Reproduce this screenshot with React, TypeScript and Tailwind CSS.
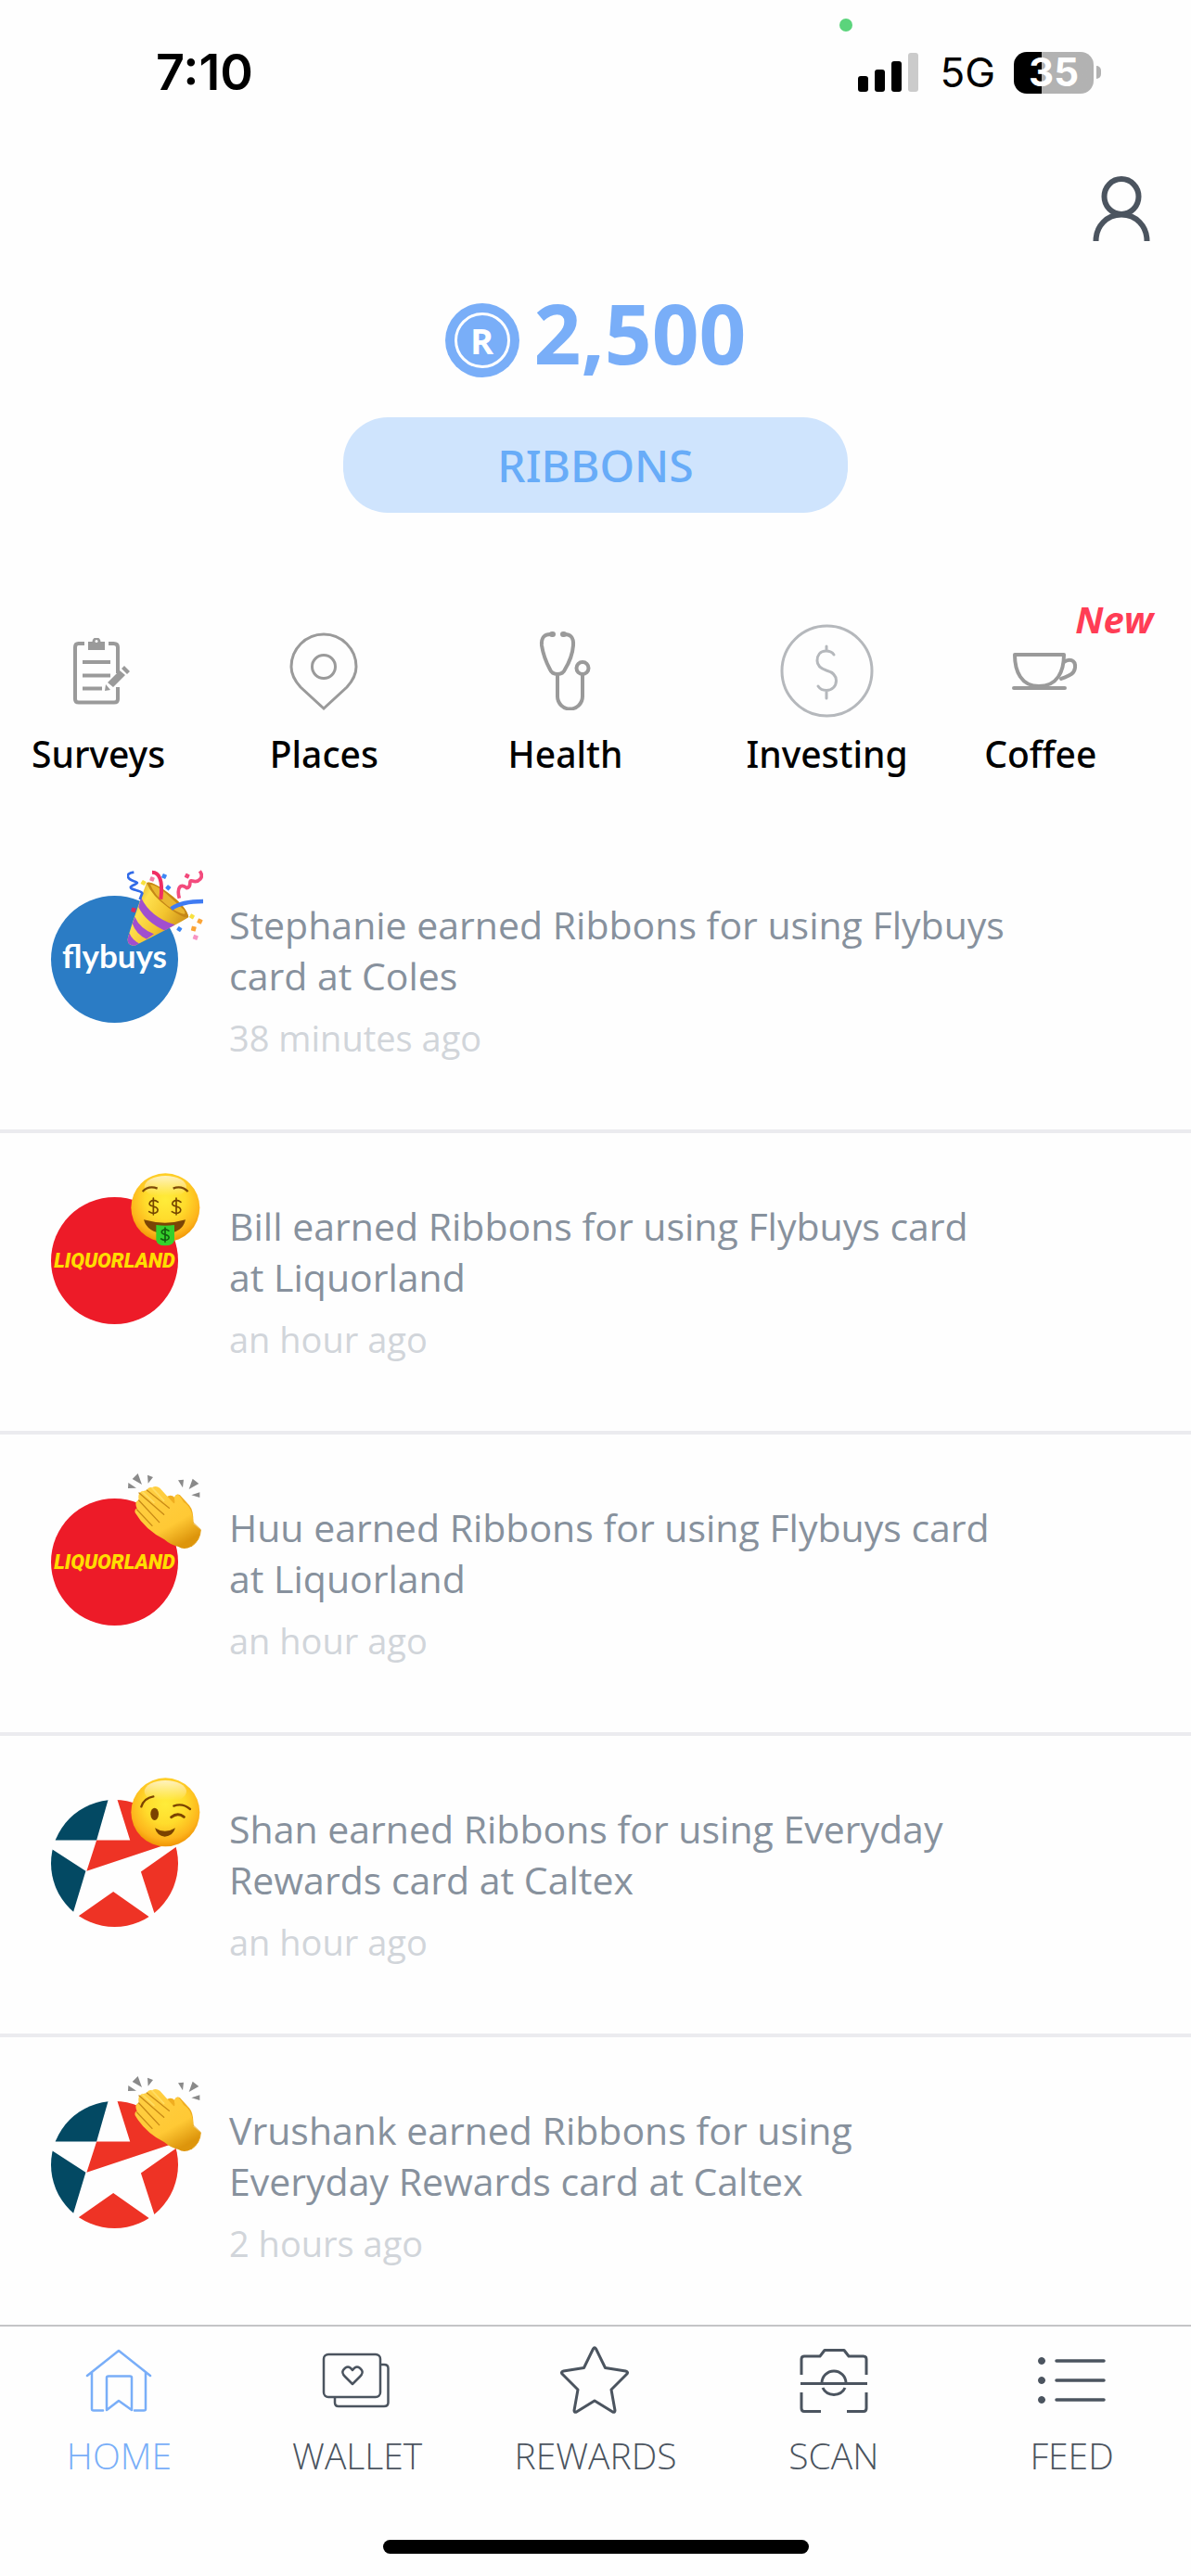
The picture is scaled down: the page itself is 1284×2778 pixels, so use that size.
import { ReactNode } from "react";

type Post = {
  brand: "flybuys" | "liquorland" | "caltex";
  emoji: "party" | "money" | "clap" | "wink";
  text: string;
  time: string;
};

const posts: Post[] = [
  { brand: "flybuys", emoji: "party", text: "Stephanie earned Ribbons for using Flybuys card at Coles", time: "38 minutes ago" },
  { brand: "liquorland", emoji: "money", text: "Bill earned Ribbons for using Flybuys card at Liquorland", time: "an hour ago" },
  { brand: "liquorland", emoji: "clap", text: "Huu earned Ribbons for using Flybuys card at Liquorland", time: "an hour ago" },
  { brand: "caltex", emoji: "wink", text: "Shan earned Ribbons for using Everyday Rewards card at Caltex", time: "an hour ago" },
  { brand: "caltex", emoji: "clap", text: "Vrushank earned Ribbons for using Everyday Rewards card at Caltex", time: "2 hours ago" },
];

const StatusBar = () => (
  <div className="relative flex h-[140px] items-center justify-between pt-4 pr-[97px] pb-0 pl-[168px] font-['Inter',sans-serif] text-black">
    <span className="text-[54px] leading-none font-semibold">7:10</span>
    <span className="absolute top-5 right-[365px] size-[14px] rounded-full bg-[#5bd47c]" />
    <div className="flex items-center">
      <svg className="h-[42px] w-[66px]" viewBox="0 0 66 42">
        <rect x="0" y="25" width="11" height="17" rx="3" />
        <rect x="18" y="18" width="11" height="24" rx="3" />
        <rect x="36" y="9" width="11" height="33" rx="3" />
        <rect x="54" y="0" width="11" height="42" rx="3" fill="#cbcbcb" />
      </svg>
      <span className="ml-[22px] text-[44px] leading-none">5G</span>
      <div className="ml-5 flex items-center gap-[3px]">
        <div className="flex h-[45px] w-[86px] items-center justify-center rounded-[14px] bg-linear-to-r from-black from-35% to-[#b2b2b2] to-35%">
          <span className="text-[42px] leading-none font-bold text-white">35</span>
        </div>
        <span className="h-[14px] w-[5px] rounded-r-full bg-[#b2b2b2]" />
      </div>
    </div>
  </div>
);

const ClipboardIcon = () => (
  <svg className="ml-2 h-[72px] w-[62px]" viewBox="0 0 62 72" fill="none" stroke="#9a9a9a" strokeWidth="4">
    <path d="M12 6H5.500Q2 6 2 10V66Q2 69.500 6 69.500H44Q48 69.500 48 66V53M38 6H43.500Q48 6 48 10V38" />
    <path d="M10 26H40M10 40.500H40M10 54.500H31" />
    <path d="M16 4H20.500A4.500 4.500 0 0 1 29.500 4H34V13H16Z" fill="#9a9a9a" stroke="none" />
    <circle cx="25" cy="3.500" r="1.500" fill="#fff" stroke="none" />
    <path d="M37 48L50 35L56 40L43 53Z M35 50L40 56L34 57Z M52 33L55 30L61 36L58 39Z" fill="#9a9a9a" stroke="none" />
  </svg>
);

const PinIcon = () => (
  <svg className="h-[84px] w-[74px]" viewBox="0 0 74 84" fill="none" stroke="#9a9a9a" strokeWidth="3">
    <path d="M37 82L12 59Q2 48 2 37A35 35 0 0 1 72 37Q72 48 62 59Z" />
    <circle cx="37" cy="37" r="12.500" />
  </svg>
);

const StethoscopeIcon = () => (
  <svg className="h-[85px] w-[56px]" viewBox="0 0 56 85" fill="none" stroke="#9a9a9a" strokeWidth="4">
    <path d="M14 3Q2 2 3 15Q5 28 12 41Q14 46 20 46Q26 46 28 41Q36 28 37 15Q38 2 26 3" strokeLinecap="round" />
    <path d="M20 46V70A13.500 13.500 0 0 0 47 70V47" />
    <circle cx="47" cy="39.500" r="6.500" />
    <path d="M14 3H15M26 3H27" strokeWidth="6" strokeLinecap="round" />
  </svg>
);

const DollarIcon = () => (
  <svg className="size-[101px]" viewBox="0 0 101 101" fill="none" stroke="#b5b8bc" strokeWidth="3" strokeLinecap="round">
    <circle cx="50.500" cy="50.500" r="48.500" />
    <path d="M58 33C56 30 53 29 49.500 29C43 29 40 34 40 39.500C40 45 44 48 50 50C57 52 60.500 55 60.500 61C60.500 67 56 71.500 50 71.500C46 71.500 43 70 41 67M50 24V29M50 72V80" />
  </svg>
);

const CupIcon = () => (
  <svg className="ml-2 h-[42px] w-[72px]" viewBox="0 0 72 42" fill="none" stroke="#9a9a9a" strokeWidth="4" strokeLinejoin="round" strokeLinecap="round">
    <path d="M4 3H57C57 21 50 37 30 37C11 37 4 21 4 3ZM3 39H58" />
    <path d="M57 11C62 7 70 8 69 17C68 25 61 26 54 29" />
  </svg>
);

const categories: { name: string; icon: ReactNode; isNew?: boolean }[] = [
  { name: "Surveys", icon: <ClipboardIcon /> },
  { name: "Places", icon: <PinIcon /> },
  { name: "Health", icon: <StethoscopeIcon /> },
  { name: "Investing", icon: <DollarIcon /> },
  { name: "Coffee", icon: <CupIcon />, isNew: true },
];

const CaltexLogo = () => (
  <svg className="size-full" viewBox="75 123 410 410">
    <path d="M263 110L222 253H60V110ZM60 270L187 353L147 485L100 540L60 485Z" fill="#034963" />
    <path d="M285 110L330 253H222L190 353L485 255V110ZM500 260L365 355L408 487L500 540ZM276 419L165 497L150 560H405L390 499Z" fill="#ee3325" />
  </svg>
);

const faceDefs = (
  <defs>
    <radialGradient id="face" cx="50%" cy="38%" r="64%">
      <stop offset="0" stopColor="#ffec3a" />
      <stop offset="0.450" stopColor="#ffdc2c" />
      <stop offset="0.800" stopColor="#fdb41c" />
      <stop offset="1" stopColor="#ee8f00" />
    </radialGradient>
    <linearGradient id="shine" x1="0" y1="0" x2="0" y2="1">
      <stop offset="0" stopColor="#fff" stopOpacity="0.700" />
      <stop offset="0.900" stopColor="#fff" stopOpacity="0" />
    </linearGradient>
  </defs>
);

const Emoji = ({ kind }: { kind: Post["emoji"] }) => {
  if (kind === "party") {
    return (
      <svg className="size-full" viewBox="321 54 246 246" fill="none">
        <defs>
          <linearGradient id="cone" x1="0" y1="0" x2="1" y2="0.600">
            <stop offset="0" stopColor="#b97c10" />
            <stop offset="0.350" stopColor="#ffe14f" />
            <stop offset="0.650" stopColor="#f3c52f" />
            <stop offset="1" stopColor="#c98b17" />
          </linearGradient>
          <clipPath id="coneClip">
            <path d="M384 96Q400 88 455 130Q512 172 520 207Q500 222 347 299Q324 301 322 280Q340 215 384 96Z" />
          </clipPath>
        </defs>
        <g clipPath="url(#coneClip)">
          <rect x="321" y="85" width="205" height="220" fill="url(#cone)" />
          <path d="M366 143Q396 207 476 232L445 252Q380 222 358 175ZM346 206Q362 243 408 262L384 278Q350 262 338 228ZM328 258Q338 282 362 293L345 302L318 290Z" fill="#a14fce" />
        </g>
        <path d="M384 96Q400 88 455 130Q512 172 520 207Q506 214 455 177Q400 137 384 96Z" fill="#c58716" />
        <path d="M396 101Q413 101 448 131L505 184Q512 198 505 197Q490 196 452 170Q408 135 396 101Z" fill="#e9b630" />
        <path d="M402 62C424 62 438 85 430 149" stroke="#f02d63" strokeWidth="12" />
        <path d="M464 180Q497 156 567 156" stroke="#3f7bf2" strokeWidth="13" />
        <path d="M343 62C312 66 322 84 343 91C368 98 343 99 333 109C328 120 367 119 370 130L362 150" stroke="#316be8" strokeWidth="8" />
        <path d="M556 58C572 78 552 97 532 90C516 86 534 110 514 113C493 95 481 114 490 146" stroke="#f34b7d" strokeWidth="11" />
        <g>
          <rect x="367" y="89" width="14" height="14" rx="2" transform="rotate(30 374 96)" fill="#f8e13e" />
          <rect x="395" y="77" width="14" height="14" rx="2" transform="rotate(20 402 84)" fill="#f57ca5" />
          <rect x="434" y="68" width="14" height="14" rx="2" transform="rotate(25 441 75)" fill="#3d86f5" />
          <rect x="447" y="105" width="14" height="14" rx="2" transform="rotate(40 454 112)" fill="#3d86f5" />
          <rect x="508" y="67" width="14" height="14" rx="2" transform="rotate(25 515 74)" fill="#f2497b" />
          <rect x="335" y="177" width="14" height="14" rx="2" transform="rotate(15 342 184)" fill="#d52c5e" />
          <rect x="524" y="198" width="14" height="14" rx="2" transform="rotate(30 531 205)" fill="#f8e13e" />
          <rect x="549" y="213" width="15" height="15" rx="2" transform="rotate(25 556 220)" fill="#fba436" />
          <rect x="529" y="237" width="15" height="15" rx="2" transform="rotate(15 536 244)" fill="#fba436" />
          <rect x="483" y="239" width="14" height="14" rx="2" transform="rotate(35 490 246)" fill="#3d86f5" />
          <rect x="535" y="265" width="15" height="15" rx="2" transform="rotate(20 542 272)" fill="#f794c4" />
        </g>
      </svg>
    );
  }
  if (kind === "clap") {
    return (
      <svg className="size-full" viewBox="321 54 246 246" fill="none">
        <defs>
          <linearGradient id="hand" x1="0" y1="0" x2="0.600" y2="1">
            <stop offset="0" stopColor="#ffd045" />
            <stop offset="0.700" stopColor="#ffc935" />
            <stop offset="1" stopColor="#dd950c" />
          </linearGradient>
        </defs>
        <path d="M356 57L369 93L338 75ZM387 62L405 69L389 89ZM325 87L351 104L324 105ZM486 79L504 77L501 103ZM533 74L553 90L521 108ZM556 118V135L529 127Z" fill="#8a8a8a" />
        <path d="M448 133Q463 122 475 135Q480 120 492 127L522 160Q537 177 535 218L490 260Z" fill="#f0ae20" />
        <path d="M385 111Q390 99 402 103Q414 95 427 104L469 151Q476 159 475 145Q470 127 486 125Q493 130 504 150Q533 167 536 220L559 239Q558 274 528 294Q505 306 487 294Q462 289 442 271Q380 240 347 184Q344 171 353 171Q343 147 359 143Q354 120 370 115Z" fill="url(#hand)" />
        <path d="M385 111L457 169M360 120L440 190M359 144L425 215M353 174L402 226" stroke="#c98a16" strokeWidth="4" strokeLinecap="round" />
        <path d="M402 104L440 145M370 116L408 151" stroke="#ffdc62" strokeWidth="5" strokeLinecap="round" />
        <path d="M534 215L559 239Q558 274 528 294" stroke="#e6a21a" strokeWidth="3" />
      </svg>
    );
  }
  if (kind === "money") {
    return (
      <svg className="size-full" viewBox="321 39 246 246" fill="none">
        {faceDefs}
        <circle cx="445" cy="157" r="111" fill="url(#face)" />
        <ellipse cx="445" cy="90" rx="68" ry="36" fill="url(#shine)" />
        <path d="M371 105Q391 84 419 95M518 105Q497 84 470 95" stroke="#7e4b08" strokeWidth="7" />
        <path d="M375 196Q445 216 510 196Q500 240 443 241Q386 238 375 196Z" fill="#7b4505" />
        <path d="M415 213Q445 218 474 213V262Q472 280 444 280Q417 280 415 262Z" fill="#35d02b" />
        <g stroke="#754600" strokeWidth="5" strokeLinecap="round">
          <path d="M421 139Q406 127 395 139Q388 150 406 153Q425 158 419 170Q408 181 392 170M406 126V180" />
          <path d="M495 139Q480 127 469 139Q462 150 480 153Q499 158 493 170Q482 181 466 170M480 126V180" />
          <path d="M456 232Q444 223 434 232Q429 241 444 244Q461 248 455 258Q445 267 431 258M444 222V268" stroke="#125d10" />
        </g>
      </svg>
    );
  }
  return (
    <svg className="size-full" viewBox="321 39 246 246" fill="none">
      {faceDefs}
      <circle cx="445" cy="163" r="111" fill="url(#face)" />
      <ellipse cx="445" cy="96" rx="68" ry="36" fill="url(#shine)" />
      <path d="M367 145Q376 117 406 112M472 143Q500 132 525 153" stroke="#7b4300" strokeWidth="7" strokeLinecap="round" />
      <ellipse cx="410" cy="169" rx="13" ry="20" fill="#7b4300" />
      <path d="M464 179Q485 162 505 178" stroke="#7b4300" strokeWidth="9" strokeLinecap="round" />
      <path d="M411 214Q443 235 477 214Q469 241 443 242Q418 240 411 214Z" fill="#7b4300" />
    </svg>
  );
};

const Avatar = ({ brand, emoji }: Pick<Post, "brand" | "emoji">) => (
  <div className="relative size-[137px] shrink-0">
    {brand === "flybuys" && (
      <div className="flex size-full items-center justify-center rounded-full bg-[#2b7cc5] pb-2">
        <span className="font-['Lato',sans-serif] text-[35px] leading-none font-bold text-white">flybuys</span>
      </div>
    )}
    {brand === "liquorland" && (
      <div className="flex size-full items-center justify-center rounded-full bg-[#ed1b28]">
        <span className="font-['Roboto','Liberation_Sans',sans-serif] text-[22px] leading-none font-black text-[#ffdd00] italic">
          LIQUORLAND
        </span>
      </div>
    )}
    {brand === "caltex" && (
      <div className="size-full overflow-hidden rounded-full">
        <CaltexLogo />
      </div>
    )}
    <div className="absolute -top-7 left-[82px] size-[82px]">
      <Emoji kind={emoji} />
    </div>
  </div>
);

const HomeIcon = () => (
  <svg className="h-[76px] w-[76px]" viewBox="0 0 76 76" fill="none" stroke="currentColor" strokeWidth="2.500" strokeLinecap="round" strokeLinejoin="round">
    <path d="M4 33L38 6L72 33M9 30V69Q9 70.500 11 70.500H21M67 30V69Q67 70.500 65 70.500H55" />
    <path d="M25 70V35Q25 33.500 27 33.500H50Q52 33.500 52 35V70L38 60Z" />
  </svg>
);

const WalletIcon = () => (
  <svg className="h-[76px] w-[76px]" viewBox="0 0 76 76" fill="none" stroke="currentColor" strokeWidth="2.500" strokeLinejoin="round">
    <rect x="2" y="10" width="61" height="46" rx="5" />
    <path d="M63 21H67Q71.500 21 71.500 25V62Q71.500 66 67 66H18Q14 66 14 62V56" />
    <path d="M33 42L25 34Q21 30 23 27Q28 20 33 27Q38 20 43 27Q45 30 41 34Z" />
  </svg>
);

const StarIcon = () => (
  <svg className="h-[76px] w-[76px]" viewBox="0 0 76 76" fill="none" stroke="currentColor" strokeWidth="3" strokeLinejoin="round">
    <path d="M35.500 4Q37 1.500 38.500 4L48.500 24.500L70.500 28Q74 29 71.500 31.500L55 48L59 70.500Q59 73 56.500 72L37 60L17.500 72Q15 73 15 70.500L19 48L2.500 31.500Q0 29 3.500 28L25.500 24.500Z" />
  </svg>
);

const ScanIcon = () => (
  <svg className="h-[76px] w-[76px]" viewBox="0 0 76 76" fill="none" stroke="currentColor" strokeWidth="3" strokeLinejoin="round">
    <path d="M3 32V15Q3 12 6 12H23L28 5.500H49L54 12H70Q73 12 73 15V32" />
    <path d="M3 51V68Q3 71.500 6 71.500H24M73 51V68Q73 71.500 70 71.500H52M2 41.500H74" />
    <path d="M25 41A13 13 0 0 1 51 41M26 46A13 12 0 0 0 50 46" />
  </svg>
);

const ListIcon = () => (
  <svg className="h-[76px] w-[76px]" viewBox="0 0 76 76" fill="currentColor" stroke="currentColor" strokeLinecap="round">
    <path d="M21 17H72M21 38H72M21 59H72" strokeWidth="3.500" />
    <circle cx="5" cy="17" r="3.500" />
    <circle cx="5" cy="38" r="3.500" />
    <circle cx="5" cy="59" r="3.500" />
  </svg>
);

const tabs = [
  { name: "HOME", icon: <HomeIcon />, active: true },
  { name: "WALLET", icon: <WalletIcon />, active: false },
  { name: "REWARDS", icon: <StarIcon />, active: false },
  { name: "SCAN", icon: <ScanIcon />, active: false },
  { name: "FEED", icon: <ListIcon />, active: false },
];

export default function App() {
  return (
    <div className="flex h-screen flex-col overflow-hidden bg-[#fefefe] font-['Open_Sans','Noto_Sans',sans-serif]">
      <StatusBar />

      <header className="flex flex-col items-center">
        <button aria-label="Profile" className="mt-[50px] mr-11 self-end">
          <svg className="h-[70px] w-[62px]" viewBox="0 0 62 70" fill="none" stroke="#4b545f" strokeWidth="6">
            <ellipse cx="31" cy="22" rx="18.500" ry="19" />
            <path d="M3.500 70C3.500 54 15 41.500 31 41.500S58.500 54 58.500 70" />
          </svg>
        </button>
        <div className="mt-9 flex items-center gap-4 text-[#79aef8]">
          <div className="mt-4 flex size-20 items-center justify-center rounded-full bg-[#79aef8]">
            <div className="flex size-[60px] items-center justify-center rounded-full border-[3px] border-white">
              <span className="text-[38px] leading-none font-bold text-white">R</span>
            </div>
          </div>
          <span className="text-[89px] leading-[126px] font-bold">2,500</span>
        </div>
        <button className="mt-7 h-[103px] w-[544px] rounded-[48px] bg-[#cfe4fd] font-['Noto_Sans','Open_Sans',sans-serif] text-[48px] font-medium text-[#68acf8]">
          RIBBONS
        </button>
      </header>

      <nav className="mt-[120px] grid grid-cols-5">
        {categories.map((category) => (
          <a key={category.name} href="#" className="relative ml-[34px] flex w-fit flex-col items-center">
            <span className="flex h-[101px] items-center">{category.icon}</span>
            <span className="mt-3 font-['Noto_Sans','Open_Sans',sans-serif] text-[39px] leading-[54px] font-medium text-black">
              {category.name}
            </span>
            {category.isNew && (
              <span className="absolute -top-8 left-[98px] text-[40px] leading-[54px] font-bold text-[#ff3d55] italic">
                New
              </span>
            )}
          </a>
        ))}
      </nav>

      <main className="min-h-0 flex-1 overflow-hidden pt-[57px]">
        <ul>
          {posts.map((post, i) => (
            <li key={i} className="flex gap-[55px] border-b-4 border-[#ebebef] pt-[69px] pr-[196px] pb-[73px] pl-[55px]">
              <Avatar brand={post.brand} emoji={post.emoji} />
              <div className="pt-1">
                <p className="text-[41px] leading-[55px] text-[#87919d]">{post.text}</p>
                <p className="mt-[13px] text-[38px] leading-[52px] text-[#d1d5da]">{post.time}</p>
              </div>
            </li>
          ))}
        </ul>
      </main>

      <footer className="border-t-2 border-[#c4c5c7] bg-[#fefefe]">
        <nav className="grid grid-cols-5 pt-5">
          {tabs.map((tab) => (
            <a
              key={tab.name}
              href="#"
              className={`flex flex-col items-center gap-4 text-[39px] leading-[54px] font-light ${tab.active ? "text-[#79aef8]" : "text-[#4b545f]"}`}
            >
              {tab.icon}
              {tab.name}
            </a>
          ))}
        </nav>
        <div className="mx-auto mt-16 mb-6 h-[15px] w-[459px] rounded-full bg-black" />
      </footer>
    </div>
  );
}
